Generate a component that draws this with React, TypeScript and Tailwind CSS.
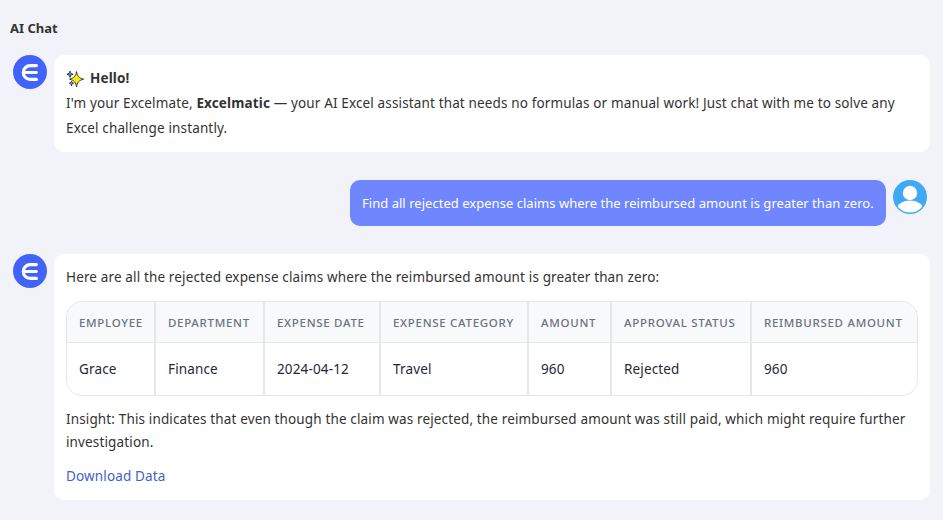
const font = { fontFamily: '"Noto Sans", sans-serif' };

function Logo() {
  return (
    <svg width="34" height="34" viewBox="0 0 34 34" className="shrink-0">
      <circle cx="17" cy="17" r="17" fill="#4263fb" />
      <path d="M23.4 10.6 H17.2 A6.9 6.9 0 0 0 17.2 24.4 H23.4" fill="none" stroke="#fff" strokeWidth="3.2" strokeLinecap="round" />
      <path d="M11 17.5 H23.4" fill="none" stroke="#fff" strokeWidth="2.8" strokeLinecap="round" />
    </svg>
  );
}

function UserAvatar() {
  return (
    <svg width="34" height="34" viewBox="0 0 34 34" className="shrink-0">
      <defs>
        <clipPath id="c"><circle cx="17" cy="17" r="15.6" /></clipPath>
      </defs>
      <circle cx="17" cy="17" r="17" fill="#3fa9f5" />
      <circle cx="17" cy="13" r="7.2" fill="#fff" />
      <ellipse cx="17" cy="29" rx="13" ry="8.5" fill="#fff" clipPath="url(#c)" />
    </svg>
  );
}

function Sparkle() {
  return (
    <svg width="18" height="18" viewBox="0 0 18 18" className="shrink-0">
      <path d="M4 1.2 C4.3 3 5 3.7 7 4.2 C5 4.7 4.3 5.4 4 7.4 C3.7 5.4 3 4.7 1 4.2 C3 3.7 3.7 3 4 1.2Z" fill="#2fa8e0" stroke="#1f2937" strokeWidth="1" />
      <path d="M5.5 11 C5.7 12.2 6.2 12.7 7.6 13.2 C6.2 13.6 5.7 14.1 5.5 15.8 C5.3 14.1 4.8 13.6 3.4 13.2 C4.8 12.7 5.3 12.2 5.5 11Z" fill="#e879b9" stroke="#1f2937" strokeWidth="1" />
      <path d="M10.5 1.5 C11.2 6 12.6 7.8 17.6 9.2 C12.6 10.6 11.2 12.4 10.5 17 C9.8 12.4 8.4 10.6 3.6 9.2 C8.4 7.8 9.8 6 10.5 1.5Z" fill="#fde910" stroke="#1f2937" strokeWidth="0.9" />
    </svg>
  );
}

const cols = [
  { h: "EMPLOYEE", v: "Grace", w: "w-[89px]" },
  { h: "DEPARTMENT", v: "Finance", w: "w-[109px]" },
  { h: "EXPENSE DATE", v: "2024-04-12", w: "w-[116px]" },
  { h: "EXPENSE CATEGORY", v: "Travel", w: "w-[148px]" },
  { h: "AMOUNT", v: "960", w: "w-[83px]" },
  { h: "APPROVAL STATUS", v: "Rejected", w: "w-[140px]" },
  { h: "REIMBURSED AMOUNT", v: "960", w: "w-[167px]" },
];

export default function App() {
  return (
    <div style={font} className="w-[943px] h-[520px] overflow-hidden bg-[#f1f3f8] text-[#333333] text-[13.5px] leading-[25px] tracking-[0.14px]">
      <div className="pl-[10px] pt-[19px] h-[55px] text-[13px] leading-[18px] font-bold tracking-normal">AI Chat</div>

      <div className="flex pl-[13px] gap-[7px]">
        <Logo />
        <div className="w-[876px] h-[97px] bg-white rounded-[10px] px-[12px] pt-[11px]">
          <div className="flex items-center gap-[6px] font-bold"><Sparkle />Hello!</div>
          <p>I'm your Excelmate, <b>Excelmatic</b> — your AI Excel assistant that needs no formulas or manual work! Just chat with me to solve any Excel challenge instantly.</p>
        </div>
      </div>

      <div className="flex justify-end gap-[7px] pr-[16px] mt-[28px]">
        <div className="h-[46px] w-[536px] bg-[#6f86ff] text-white text-[13px] tracking-[0.03px] rounded-[10px] px-[12px] flex items-center whitespace-nowrap">Find all rejected expense claims where the reimbursed amount is greater than zero.</div>
        <UserAvatar />
      </div>

      <div className="flex pl-[13px] gap-[7px] mt-[28px]">
        <Logo />
        <div className="w-[876px] h-[246px] bg-white rounded-[10px] px-[12px] pt-[11px]">
          <p>Here are all the rejected expense claims where the reimbursed amount is greater than zero:</p>
          <div className="mt-[11px] w-[852px] h-[95px] border border-[#e5e7eb] rounded-[16px] overflow-hidden">
            <div className="flex h-[41px] bg-[#f8f9fb] border-b border-[#e5e7eb]">
              {cols.map((c, i) => (
                <div key={c.h} className={`${c.w} shrink-0 pl-[12px] flex items-center whitespace-nowrap text-[11.5px] font-medium text-[#6b7280] tracking-[0.7px] ${i < 6 ? "border-r-2 border-[#e5e7eb]" : ""}`}>{c.h}</div>
              ))}
            </div>
            <div className="flex h-[52px]">
              {cols.map((c, i) => (
                <div key={c.h} className={`${c.w} shrink-0 pl-[12px] flex items-center whitespace-nowrap text-[#1f2937] ${i < 6 ? "border-r-2 border-[#e5e7eb]" : ""}`}>{c.v}</div>
              ))}
            </div>
          </div>
          <p className="mt-[12px] leading-[23px]">Insight: This indicates that even though the claim was rejected, the reimbursed amount was still paid, which might require further investigation.</p>
          <p className="mt-[10px] text-[#4461c9]">Download Data</p>
        </div>
      </div>
    </div>
  );
}
